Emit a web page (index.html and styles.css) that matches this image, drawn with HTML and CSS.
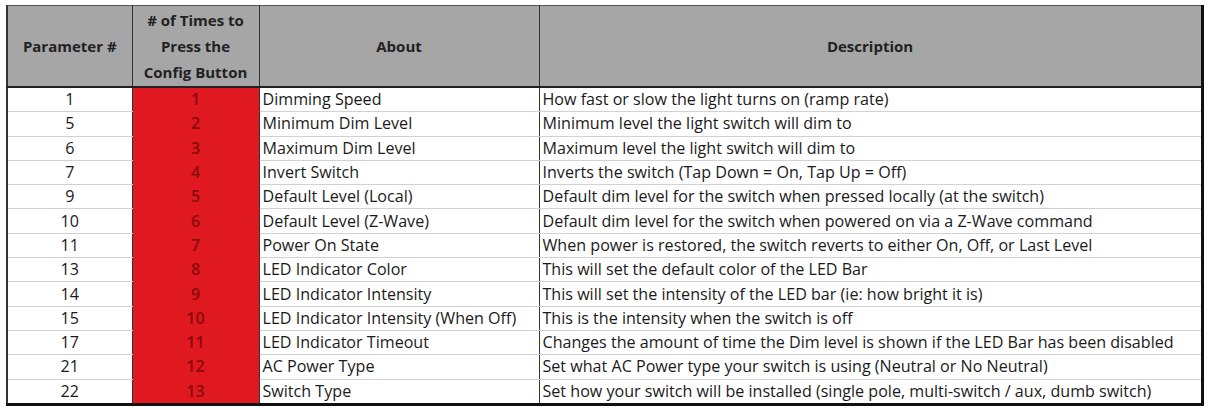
FILE: index.html
```html
<!DOCTYPE html>
<html>
<head>
<meta charset="utf-8">
<link rel="stylesheet" href="styles.css">
</head>
<body>
<table class="params">
  <colgroup>
    <col class="c-param">
    <col class="c-times">
    <col class="c-about">
    <col class="c-desc">
  </colgroup>
  <thead>
    <tr>
      <th>Parameter #</th>
      <th># of Times to<br>Press the<br>Config Button</th>
      <th>About</th>
      <th>Description</th>
    </tr>
  </thead>
  <tbody>
    <tr><td class="num">1</td><td class="red">1</td><td>Dimming Speed</td><td>How fast or slow the light turns on (ramp rate)</td></tr>
    <tr><td class="num">5</td><td class="red">2</td><td>Minimum Dim Level</td><td>Minimum level the light switch will dim to</td></tr>
    <tr><td class="num">6</td><td class="red">3</td><td>Maximum Dim Level</td><td>Maximum level the light switch will dim to</td></tr>
    <tr><td class="num">7</td><td class="red">4</td><td>Invert Switch</td><td>Inverts the switch (Tap Down = On, Tap Up = Off)</td></tr>
    <tr><td class="num">9</td><td class="red">5</td><td>Default Level (Local)</td><td>Default dim level for the switch when pressed locally (at the switch)</td></tr>
    <tr><td class="num">10</td><td class="red">6</td><td>Default Level (Z-Wave)</td><td>Default dim level for the switch when powered on via a Z-Wave command</td></tr>
    <tr><td class="num">11</td><td class="red">7</td><td>Power On State</td><td>When power is restored, the switch reverts to either On, Off, or Last Level</td></tr>
    <tr><td class="num">13</td><td class="red">8</td><td>LED Indicator Color</td><td>This will set the default color of the LED Bar</td></tr>
    <tr><td class="num">14</td><td class="red">9</td><td>LED Indicator Intensity</td><td>This will set the intensity of the LED bar (ie: how bright it is)</td></tr>
    <tr><td class="num">15</td><td class="red">10</td><td>LED Indicator Intensity (When Off)</td><td>This is the intensity when the switch is off</td></tr>
    <tr><td class="num">17</td><td class="red">11</td><td>LED Indicator Timeout</td><td>Changes the amount of time the Dim level is shown if the LED Bar has been disabled</td></tr>
    <tr><td class="num">21</td><td class="red">12</td><td>AC Power Type</td><td>Set what AC Power type your switch is using (Neutral or No Neutral)</td></tr>
    <tr><td class="num">22</td><td class="red">13</td><td>Switch Type</td><td>Set how your switch will be installed (single pole, multi-switch / aux, dumb switch)</td></tr>
  </tbody>
</table>
</body>
</html>
```

FILE: styles.css
```css
html, body {
  margin: 0;
  background: #ffffff;
}
body {
  padding: 5px 0 0 6px;
  font-family: "Open Sans", Lato, sans-serif;
  color: #1a1a1a;
}
.params {
  border-collapse: collapse;
  table-layout: fixed;
  width: 1195px;
  border-top: 1px solid #555;
  border-left: 2px solid #333;
  border-right: 3px solid #111;
  border-bottom: 3px solid #111;
}
.c-param { width: 125px; }
.c-times { width: 127px; }
.c-about { width: 280px; }
.c-desc { width: 663px; }
.params th {
  background: #a6a6a6;
  height: 80px;
  font-size: 15px;
  font-weight: 700;
  line-height: 26px;
  color: #222;
  text-align: center;
  vertical-align: middle;
  padding: 0;
  border-left: 1px solid #333;
  border-bottom: 2px solid #222;
}
.params td {
  height: 23.3px;
  padding: 0 0 0 3px;
  font-size: 16.1px;
  line-height: 23px;
  border-left: 1px solid #333;
  border-bottom: 1px solid #d2d2d2;
  white-space: nowrap;
  overflow: hidden;
}
.params td.num {
  text-align: center;
  padding: 0;
}
.params td.red {
  background: #e0181f;
  color: #8a0a0c;
  font-weight: 600;
  text-align: center;
  padding: 0;
  border-bottom: 1px solid #e0181f;
}
.params tbody tr:last-child td {
  border-bottom: none;
}
```
